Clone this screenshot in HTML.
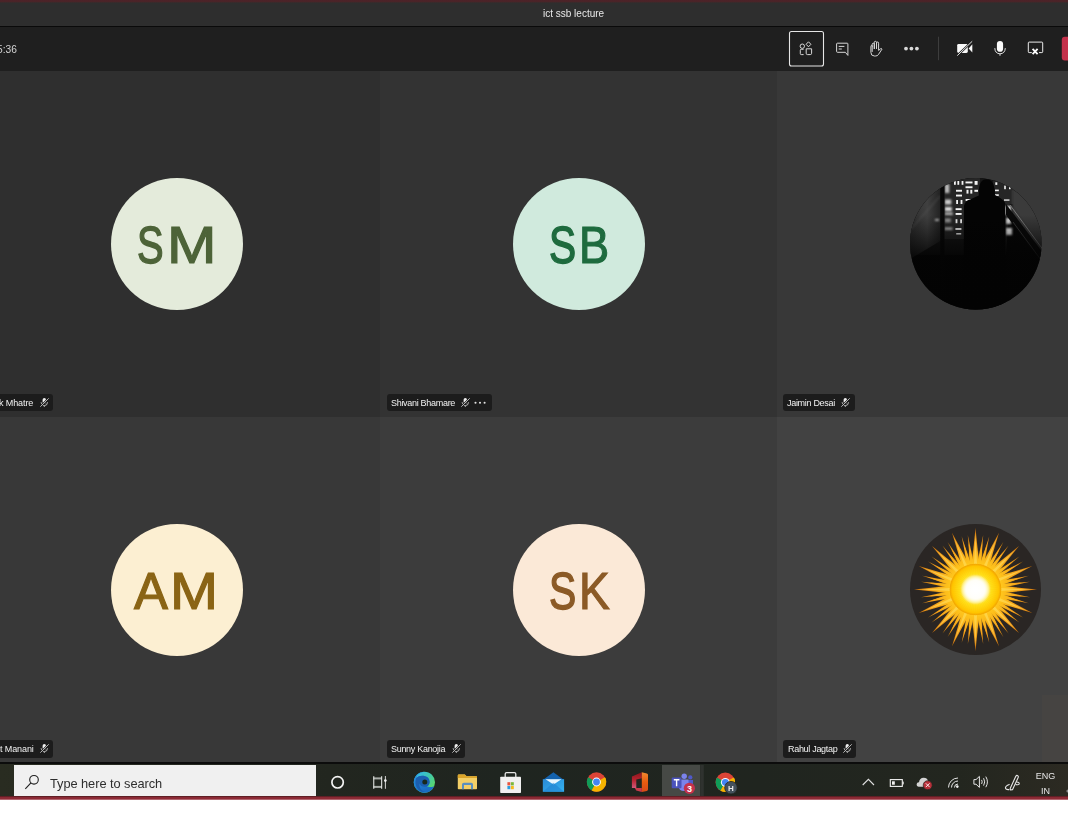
<!DOCTYPE html>
<html><head><meta charset="utf-8">
<style>
*{margin:0;padding:0;box-sizing:border-box}
html,body{width:1068px;height:816px;overflow:hidden;background:#fff;font-family:"Liberation Sans",sans-serif}
.a{position:absolute}
#topline{left:0;top:0;width:1068px;height:3px;background:linear-gradient(#4e2228,#4a2428 55%,#2e2e2e)}
#titlebar{left:0;top:3px;width:1068px;height:23px;background:#2e2e2e}
#title{left:542.5px;top:7.7px;color:#e8e8e8;font-size:10px;white-space:nowrap;will-change:transform}
#blk1{left:0;top:26px;width:1068px;height:1px;background:#0a0a0a}
#toolbar{left:0;top:27px;width:1068px;height:44px;background:#1f1f1f}
#timer{left:-2.6px;top:44px;color:#d4d4d4;font-size:10.2px;will-change:transform}
.tile{position:absolute}
.circ{position:absolute;width:132px;height:132px;border-radius:50%}
.ltr{position:absolute;font-size:54px;line-height:80px;-webkit-text-stroke:1.2px currentColor;transform-origin:0 0;white-space:nowrap}
.lbl{position:absolute;background:#1c1c1c;border-radius:3px}
.lt{position:absolute;will-change:transform;color:#f2f2f2;font-size:9px;line-height:17px;letter-spacing:-0.3px;white-space:nowrap}
#tbline{left:0;top:762px;width:1068px;height:2px;background:#0c0c0c}
#taskbar{left:0;top:764px;width:1068px;height:32px;background:linear-gradient(90deg,#292c21 0px,#22261f 330px,#1f2520 500px,#20251f 760px,#23261f 960px,#2c2a22 1068px)}
#redline{left:0;top:796px;width:1068px;height:4px;background:linear-gradient(#4a1a1e,#8e2a35 40%,#8e2a35 80%,#e8c8cc)}
#search{left:14px;top:765px;width:302px;height:31px;background:#f0f0f0}
#searchtxt{left:50.3px;top:776px;font-size:12.8px;color:#2e2e2e;white-space:nowrap;will-change:transform;letter-spacing:-0.05px}
</style></head><body>
<div class="a" id="topline"></div>
<div class="a" id="titlebar"></div>
<div class="a" id="title">ict ssb lecture</div>
<div class="a" id="blk1"></div>
<div class="a" id="toolbar"></div>
<div class="a" id="timer">5:36</div>


<svg class="a" style="left:0;top:0" width="1068" height="816" viewBox="0 0 1068 816">
<!-- participants box -->
<rect x="789.5" y="31.5" width="34" height="34.5" rx="2" fill="none" stroke="#e6e6e6" stroke-width="1.1"/>
<g fill="none" stroke="#d8d8d8" stroke-width="1">
<circle cx="802.3" cy="46.2" r="2.2"/>
<path d="M808.5 41.8 L810.9 44.3 L808.5 46.8 L806.1 44.3 Z" stroke-linejoin="round"/>
<path d="M803.6 49.3 H801.2 Q800.3 49.3 800.3 50.2 V53.6 Q800.3 54.6 801.2 54.6 H803.6"/>
<path d="M806.2 48.8 H811.6 V53.3 Q811.6 54.6 810.3 54.6 H807.5 Q806.2 54.6 806.2 53.3 Z"/>
</g>
<!-- chat -->
<g fill="none" stroke="#d8d8d8" stroke-width="1">
<path d="M837.4 43.2 H847.2 Q847.9 43.2 847.9 43.9 V55.4 L845.4 52.3 H837.4 Q836.6 52.3 836.6 51.5 V44 Q836.6 43.2 837.4 43.2 Z" stroke-linejoin="round"/>
<path d="M838.7 46.4 H844.4 M838.7 49 H841.8"/>
</g>
<!-- hand -->
<g fill="none" stroke="#d8d8d8" stroke-width="1" stroke-linecap="round" stroke-linejoin="round">
<path d="M872.2 51.5 V44.4 Q872.2 43.2 873.3 43.2 Q874.3 43.2 874.3 44.4 V49 V42.5 Q874.3 41.3 875.4 41.3 Q876.5 41.3 876.5 42.5 V48.8 V43.2 Q876.5 42 877.6 42 Q878.6 42 878.6 43.2 V50.4 L880.5 48.8 Q881.6 48 882 49.1 L878.4 54.6 Q877.5 56 875.5 56 H874.4 Q870.9 56 870.9 52.4 V46.4 Q870.9 45.4 871.6 45.4 Q872.2 45.4 872.2 46.4"/>
</g>
<!-- dots -->
<g fill="#d9d9d9"><circle cx="906" cy="48.6" r="1.9"/><circle cx="911.4" cy="48.6" r="1.9"/><circle cx="916.9" cy="48.6" r="1.9"/></g>
<!-- separator -->
<rect x="938" y="36.7" width="1" height="23.5" fill="#3d3d3d"/>
<!-- camera off -->
<g fill="#fafafa">
<rect x="957.2" y="43.9" width="10.6" height="9" rx="1.4"/>
<path d="M968.7 48.4 L972.3 44.3 V52.5 Z"/>
</g>
<path d="M956.8 56 L972.6 41" stroke="#1f1f1f" stroke-width="2.2"/>
<path d="M957.3 55.6 L972.2 41.3" stroke="#fafafa" stroke-width="0.9"/>
<!-- mic -->
<rect x="996.9" y="41" width="6.2" height="10.8" rx="3.1" fill="#fafafa"/>
<path d="M994.8 48.1 Q995 53.6 1000 53.8 Q1005 53.6 1005.3 48.1 M1000 53.8 V55.8" fill="none" stroke="#f0f0f0" stroke-width="0.9"/>
<!-- share off -->
<path d="M1031.8 52.6 H1029.1 Q1028.3 52.6 1028.3 51.8 V42.9 Q1028.3 42.1 1029.1 42.1 H1041.9 Q1042.7 42.1 1042.7 42.9 V51.8 Q1042.7 52.6 1041.9 52.6 H1039" fill="none" stroke="#ececec" stroke-width="1"/>
<path d="M1032.6 48.8 L1037.6 54.2 M1037.6 48.8 L1032.6 54.2" stroke="#ffffff" stroke-width="1.8"/>
<!-- red leave -->
<rect x="1061.8" y="36.8" width="20" height="23.6" rx="3" fill="#c4314b"/>
</svg>

<!-- tiles -->
<div class="tile" style="left:0;top:71px;width:380px;height:346px;background:#2f2f2f"></div>
<div class="tile" style="left:380px;top:71px;width:397px;height:346px;background:#333333"></div>
<div class="tile" style="left:777px;top:71px;width:291px;height:346px;background:#383838"></div>
<div class="tile" style="left:0;top:417px;width:380px;height:345px;background:#383838"></div>
<div class="tile" style="left:380px;top:417px;width:397px;height:345px;background:#3c3c3c"></div>
<div class="tile" style="left:777px;top:417px;width:291px;height:345px;background:#424242"></div>

<div class="tile" style="left:1042px;top:695px;width:26px;height:67px;background:#464442"></div>
<div class="circ" style="left:111px;top:178px;background:#e4ebdb"></div>
<div class="circ" style="left:513px;top:178px;background:#d0eadd"></div>
<div class="circ" style="left:111px;top:524px;background:#fcefd2"></div>
<div class="circ" style="left:513px;top:524px;background:#fbe9d7"></div>
<div class="ltr" style="left:137.40px;top:205.40px;transform:scale(0.738,0.975);color:#4d6338;-webkit-text-stroke-width:1.5px">S</div>
<div class="ltr" style="left:166.60px;top:205.40px;transform:scale(1.100,0.975);color:#4d6338">M</div>
<div class="ltr" style="left:549.00px;top:205.40px;transform:scale(0.753,0.975);color:#1e6b3e;-webkit-text-stroke-width:1.5px">S</div>
<div class="ltr" style="left:578.95px;top:205.40px;transform:scale(0.837,0.975);color:#1e6b3e">B</div>
<div class="ltr" style="left:134.00px;top:551.40px;transform:scale(0.942,0.975);color:#8a6415">A</div>
<div class="ltr" style="left:170.40px;top:551.40px;transform:scale(1.068,0.975);color:#8a6415">M</div>
<div class="ltr" style="left:548.80px;top:551.40px;transform:scale(0.756,0.975);color:#8b5a26;-webkit-text-stroke-width:1.5px">S</div>
<div class="ltr" style="left:578.60px;top:551.40px;transform:scale(0.853,0.975);color:#8b5a26">K</div>
<svg class="a" style="left:0;top:0" width="1068" height="816">
<defs>
<filter id="bl" x="-50%" y="-50%" width="200%" height="200%"><feGaussianBlur stdDeviation="1"/></filter><filter id="bl2" x="-50%" y="-50%" width="200%" height="200%"><feGaussianBlur stdDeviation="0.45"/></filter>
<linearGradient id="fadeB" x1="0" y1="0" x2="0" y2="1"><stop offset="0" stop-color="#030303" stop-opacity="0"/><stop offset="0.4" stop-color="#030303" stop-opacity="0.85"/><stop offset="1" stop-color="#030303" stop-opacity="1"/></linearGradient>
<radialGradient id="glow" cx="0.5" cy="0.5" r="0.5"><stop offset="0.6" stop-color="#f5a010" stop-opacity="0.9"/><stop offset="1" stop-color="#e08010" stop-opacity="0"/></radialGradient>
<clipPath id="pc"><circle cx="975.8" cy="243.7" r="65.8"/></clipPath>
<linearGradient id="pg" x1="0" y1="0" x2="0" y2="1"><stop offset="0" stop-color="#3a3a3a"/><stop offset="0.45" stop-color="#1a1a1a"/><stop offset="0.7" stop-color="#060606"/><stop offset="1" stop-color="#020202"/></linearGradient>
<linearGradient id="lg" x1="0" y1="0" x2="1" y2="0"><stop offset="0" stop-color="#262626"/><stop offset="0.6" stop-color="#404040"/><stop offset="1" stop-color="#1e1e1e"/></linearGradient>
<radialGradient id="sunC" cx="0.5" cy="0.5" r="0.5"><stop offset="0" stop-color="#ffffff"/><stop offset="0.4" stop-color="#fff6b0"/><stop offset="0.62" stop-color="#ffe11a"/><stop offset="0.9" stop-color="#ffc400"/><stop offset="1" stop-color="#f0a000"/></radialGradient><radialGradient id="sunW" cx="0.5" cy="0.5" r="0.5"><stop offset="0" stop-color="#fff" stop-opacity="1"/><stop offset="0.6" stop-color="#fff" stop-opacity="0.9"/><stop offset="1" stop-color="#fff" stop-opacity="0"/></radialGradient>
<radialGradient id="spk" cx="975.5" cy="589.5" r="62" gradientUnits="userSpaceOnUse"><stop offset="0.4" stop-color="#ffc81a"/><stop offset="0.7" stop-color="#f6a21a"/><stop offset="1" stop-color="#c86e0c"/></radialGradient>
</defs>
<g clip-path="url(#pc)">
<rect x="905" y="175" width="142" height="140" fill="#060606"/>
<path d="M905 175 H1047 V255 L1010 200 L1006 255 H905 Z" fill="#161616"/>
<path d="M905 262 L905 205 L942 178 L942 240 Z" fill="url(#lg)"/>
<path d="M905 236 L940 196" stroke="#5a5a5a" stroke-width="2" opacity="0.35" filter="url(#bl)"/>
<rect x="944" y="177" width="36" height="62" fill="#262626"/>
<rect x="993" y="177" width="20" height="27" fill="#262626"/>
<g filter="url(#bl)"><rect x="944.8" y="184" width="4.5" height="9" fill="#bbb"/><rect x="944.8" y="199.5" width="6.5" height="5" fill="#ccc"/><rect x="944.8" y="207" width="7" height="4" fill="#ddd"/><rect x="944.8" y="212.5" width="8" height="2.5" fill="#bbb"/><rect x="944.8" y="218.5" width="6" height="4" fill="#999"/><rect x="944.5" y="227.5" width="8" height="2.5" fill="#ccc"/><rect x="935" y="219" width="4" height="2" fill="#bbb"/><rect x="1005" y="206" width="6" height="9" fill="#eee"/><rect x="1006" y="218" width="5" height="6" fill="#ddd"/><rect x="1006" y="228" width="6" height="7" fill="#fff"/></g>
<g fill="#f4f4f4" filter="url(#bl2)"><rect x="954" y="181" width="1.8" height="3.8"/><rect x="957.4" y="181" width="1.8" height="3.8"/><rect x="961.6" y="181" width="1.8" height="3.8"/><rect x="956" y="189.8" width="6" height="1.9"/><rect x="956" y="194.6" width="6" height="1.9"/><rect x="956.2" y="200" width="1.8" height="4"/><rect x="960.6" y="200" width="1.8" height="4"/><rect x="955.6" y="208.2" width="6" height="1.9"/><rect x="955.6" y="213" width="6" height="1.9"/><rect x="955.6" y="219.2" width="1.8" height="4"/><rect x="960.2" y="219.2" width="1.8" height="4"/><rect x="955.4" y="228" width="6" height="2"/><rect x="956.2" y="233" width="5" height="1.6"/><rect x="965.5" y="181.5" width="7" height="1.9"/><rect x="965.5" y="186.3" width="7" height="1.9"/><rect x="966.5" y="189.8" width="2" height="3.8"/><rect x="970.3" y="189.8" width="2" height="3.8"/><rect x="965.6" y="199" width="6" height="1.9"/><rect x="966" y="204" width="2" height="2.2"/><rect x="974.6" y="181" width="3" height="3.8"/><rect x="974.4" y="189.8" width="3.6" height="2"/><rect x="995.3" y="182.3" width="2" height="2.6"/><rect x="995" y="189.6" width="3.8" height="1.6"/><rect x="995" y="194.3" width="3.8" height="1.6"/><rect x="1004.2" y="185.6" width="1.6" height="3.6"/><rect x="1009" y="185.6" width="1.6" height="3.6"/><rect x="1004" y="199.4" width="5.5" height="1.3"/></g>
<rect x="940.3" y="175" width="4.2" height="140" fill="#080808"/>
<path d="M1012 190 L1047 160 L1047 262 L1012 214 Z" fill="#444" opacity="0.8" filter="url(#bl)"/>
<path d="M1006 204 L1047 258 L1047 270 L1006 215 Z" fill="#0a0a0a"/>
<path d="M1010 205 L1047 255" stroke="#7a7a7a" stroke-width="1"/>
<path d="M1013 222 L1047 268" stroke="#444" stroke-width="0.8"/>
<path d="M978.8 195.5 Q978 179.2 986.5 179.2 Q995 179.2 995 195 Q1003 199 1005.2 203 L1005.8 320 L963.5 320 L964 206 Q965 200.5 970 199.5 Z" fill="#040404"/>
<rect x="905" y="215" width="142" height="105" fill="url(#fadeB)"/>
</g>
<circle cx="975.5" cy="589.5" r="65.5" fill="#2a2624"/>
<circle cx="975.5" cy="589.5" r="40" fill="url(#glow)"/>
<g filter="url(#bl2)">
<g fill="url(#spk)"><path d="M971.8 564.8 L975.5 528.0 L979.2 564.8 Z"/><path d="M970.0 565.1 L967.8 535.0 L974.0 564.5 Z"/><path d="M977.0 564.5 L983.2 535.0 L981.0 565.1 Z"/><path d="M977.7 564.6 L982.4 543.0 L980.6 565.0 Z"/><path d="M980.1 564.9 L987.0 543.9 L983.0 565.7 Z"/><path d="M981.5 565.2 L999.0 532.7 L988.4 568.1 Z"/><path d="M979.8 564.9 L989.3 536.2 L983.7 565.9 Z"/><path d="M986.4 567.0 L1003.4 542.1 L989.9 569.0 Z"/><path d="M987.0 567.3 L999.6 549.2 L989.6 568.9 Z"/><path d="M989.2 568.6 L1003.5 551.8 L991.6 570.4 Z"/><path d="M990.3 569.4 L1019.0 546.0 L995.6 574.7 Z"/><path d="M988.9 568.4 L1008.6 545.6 L992.1 570.8 Z"/><path d="M994.2 572.9 L1019.4 556.4 L996.6 576.1 Z"/><path d="M994.6 573.4 L1013.2 561.5 L996.4 575.8 Z"/><path d="M996.1 575.4 L1015.8 565.4 L997.7 578.0 Z"/><path d="M996.9 576.6 L1032.3 566.0 L999.8 583.5 Z"/><path d="M996.0 575.1 L1022.9 561.6 L998.0 578.6 Z"/><path d="M999.1 581.3 L1028.8 575.7 L1000.1 585.2 Z"/><path d="M999.3 582.0 L1021.1 578.0 L1000.1 584.9 Z"/><path d="M1000.0 584.4 L1022.0 582.6 L1000.4 587.3 Z"/><path d="M1000.2 585.8 L1037.0 589.5 L1000.2 593.2 Z"/><path d="M999.9 584.0 L1030.0 581.8 L1000.5 588.0 Z"/><path d="M1000.5 591.0 L1030.0 597.2 L999.9 595.0 Z"/><path d="M1000.4 591.7 L1022.0 596.4 L1000.0 594.6 Z"/><path d="M1000.1 594.1 L1021.1 601.0 L999.3 597.0 Z"/><path d="M999.8 595.5 L1032.3 613.0 L996.9 602.4 Z"/><path d="M1000.1 593.8 L1028.8 603.3 L999.1 597.7 Z"/><path d="M998.0 600.4 L1022.9 617.4 L996.0 603.9 Z"/><path d="M997.7 601.0 L1015.8 613.6 L996.1 603.6 Z"/><path d="M996.4 603.2 L1013.2 617.5 L994.6 605.6 Z"/><path d="M995.6 604.3 L1019.0 633.0 L990.3 609.6 Z"/><path d="M996.6 602.9 L1019.4 622.6 L994.2 606.1 Z"/><path d="M992.1 608.2 L1008.6 633.4 L988.9 610.6 Z"/><path d="M991.6 608.6 L1003.5 627.2 L989.2 610.4 Z"/><path d="M989.6 610.1 L999.6 629.8 L987.0 611.7 Z"/><path d="M988.4 610.9 L999.0 646.3 L981.5 613.8 Z"/><path d="M989.9 610.0 L1003.4 636.9 L986.4 612.0 Z"/><path d="M983.7 613.1 L989.3 642.8 L979.8 614.1 Z"/><path d="M983.0 613.3 L987.0 635.1 L980.1 614.1 Z"/><path d="M980.6 614.0 L982.4 636.0 L977.7 614.4 Z"/><path d="M979.2 614.2 L975.5 651.0 L971.8 614.2 Z"/><path d="M981.0 613.9 L983.2 644.0 L977.0 614.5 Z"/><path d="M974.0 614.5 L967.8 644.0 L970.0 613.9 Z"/><path d="M973.3 614.4 L968.6 636.0 L970.4 614.0 Z"/><path d="M970.9 614.1 L964.0 635.1 L968.0 613.3 Z"/><path d="M969.5 613.8 L952.0 646.3 L962.6 610.9 Z"/><path d="M971.2 614.1 L961.7 642.8 L967.3 613.1 Z"/><path d="M964.6 612.0 L947.6 636.9 L961.1 610.0 Z"/><path d="M964.0 611.7 L951.4 629.8 L961.4 610.1 Z"/><path d="M961.8 610.4 L947.5 627.2 L959.4 608.6 Z"/><path d="M960.7 609.6 L932.0 633.0 L955.4 604.3 Z"/><path d="M962.1 610.6 L942.4 633.4 L958.9 608.2 Z"/><path d="M956.8 606.1 L931.6 622.6 L954.4 602.9 Z"/><path d="M956.4 605.6 L937.8 617.5 L954.6 603.2 Z"/><path d="M954.9 603.6 L935.2 613.6 L953.3 601.0 Z"/><path d="M954.1 602.4 L918.7 613.0 L951.2 595.5 Z"/><path d="M955.0 603.9 L928.1 617.4 L953.0 600.4 Z"/><path d="M951.9 597.7 L922.2 603.3 L950.9 593.8 Z"/><path d="M951.7 597.0 L929.9 601.0 L950.9 594.1 Z"/><path d="M951.0 594.6 L929.0 596.4 L950.6 591.7 Z"/><path d="M950.8 593.2 L914.0 589.5 L950.8 585.8 Z"/><path d="M951.1 595.0 L921.0 597.2 L950.5 591.0 Z"/><path d="M950.5 588.0 L921.0 581.8 L951.1 584.0 Z"/><path d="M950.6 587.3 L929.0 582.6 L951.0 584.4 Z"/><path d="M950.9 584.9 L929.9 578.0 L951.7 582.0 Z"/><path d="M951.2 583.5 L918.7 566.0 L954.1 576.6 Z"/><path d="M950.9 585.2 L922.2 575.7 L951.9 581.3 Z"/><path d="M953.0 578.6 L928.1 561.6 L955.0 575.1 Z"/><path d="M953.3 578.0 L935.2 565.4 L954.9 575.4 Z"/><path d="M954.6 575.8 L937.8 561.5 L956.4 573.4 Z"/><path d="M955.4 574.7 L932.0 546.0 L960.7 569.4 Z"/><path d="M954.4 576.1 L931.6 556.4 L956.8 572.9 Z"/><path d="M958.9 570.8 L942.4 545.6 L962.1 568.4 Z"/><path d="M959.4 570.4 L947.5 551.8 L961.8 568.6 Z"/><path d="M961.4 568.9 L951.4 549.2 L964.0 567.3 Z"/><path d="M962.6 568.1 L952.0 532.7 L969.5 565.2 Z"/><path d="M961.1 569.0 L947.6 542.1 L964.6 567.0 Z"/><path d="M967.3 565.9 L961.7 536.2 L971.2 564.9 Z"/><path d="M968.0 565.7 L964.0 543.9 L970.9 564.9 Z"/><path d="M970.4 565.0 L968.6 543.0 L973.3 564.6 Z"/></g>
<g fill="#ffe060" opacity="0.6"><path d="M974.0 564.5 L975.5 532.5 L977.0 564.5 Z"/><path d="M983.7 565.9 L997.3 536.8 L986.4 567.0 Z"/><path d="M992.1 570.8 L1015.8 549.2 L994.2 572.9 Z"/><path d="M998.0 578.6 L1028.2 567.7 L999.1 581.3 Z"/><path d="M1000.5 588.0 L1032.5 589.5 L1000.5 591.0 Z"/><path d="M999.1 597.7 L1028.2 611.3 L998.0 600.4 Z"/><path d="M994.2 606.1 L1015.8 629.8 L992.1 608.2 Z"/><path d="M986.4 612.0 L997.3 642.2 L983.7 613.1 Z"/><path d="M977.0 614.5 L975.5 646.5 L974.0 614.5 Z"/><path d="M967.3 613.1 L953.7 642.2 L964.6 612.0 Z"/><path d="M958.9 608.2 L935.2 629.8 L956.8 606.1 Z"/><path d="M953.0 600.4 L922.8 611.3 L951.9 597.7 Z"/><path d="M950.5 591.0 L918.5 589.5 L950.5 588.0 Z"/><path d="M951.9 581.3 L922.8 567.7 L953.0 578.6 Z"/><path d="M956.8 572.9 L935.2 549.2 L958.9 570.8 Z"/><path d="M964.6 567.0 L953.7 536.8 L967.3 565.9 Z"/></g>
</g>
<circle cx="975.5" cy="589.5" r="25.8" fill="url(#sunC)"/>
<g stroke="#ffc000" stroke-width="0.5" opacity="0.35"><path d="M989.5 589.5 L1000.5 589.5"/><path d="M989.4 590.9 L1000.4 592.0"/><path d="M989.2 592.2 L1000.0 594.4"/><path d="M988.9 593.6 L999.4 596.8"/><path d="M988.4 594.9 L998.6 599.1"/><path d="M987.8 596.1 L997.5 601.3"/><path d="M987.1 597.3 L996.3 603.4"/><path d="M986.3 598.4 L994.8 605.4"/><path d="M985.4 599.4 L993.2 607.2"/><path d="M984.4 600.3 L991.4 608.8"/><path d="M983.3 601.1 L989.4 610.3"/><path d="M982.1 601.8 L987.3 611.5"/><path d="M980.9 602.4 L985.1 612.6"/><path d="M979.6 602.9 L982.8 613.4"/><path d="M978.2 603.2 L980.4 614.0"/><path d="M976.9 603.4 L978.0 614.4"/><path d="M975.5 603.5 L975.5 614.5"/><path d="M974.1 603.4 L973.0 614.4"/><path d="M972.8 603.2 L970.6 614.0"/><path d="M971.4 602.9 L968.2 613.4"/><path d="M970.1 602.4 L965.9 612.6"/><path d="M968.9 601.8 L963.7 611.5"/><path d="M967.7 601.1 L961.6 610.3"/><path d="M966.6 600.3 L959.6 608.8"/><path d="M965.6 599.4 L957.8 607.2"/><path d="M964.7 598.4 L956.2 605.4"/><path d="M963.9 597.3 L954.7 603.4"/><path d="M963.2 596.1 L953.5 601.3"/><path d="M962.6 594.9 L952.4 599.1"/><path d="M962.1 593.6 L951.6 596.8"/><path d="M961.8 592.2 L951.0 594.4"/><path d="M961.6 590.9 L950.6 592.0"/><path d="M961.5 589.5 L950.5 589.5"/><path d="M961.6 588.1 L950.6 587.0"/><path d="M961.8 586.8 L951.0 584.6"/><path d="M962.1 585.4 L951.6 582.2"/><path d="M962.6 584.1 L952.4 579.9"/><path d="M963.2 582.9 L953.5 577.7"/><path d="M963.9 581.7 L954.7 575.6"/><path d="M964.7 580.6 L956.2 573.6"/><path d="M965.6 579.6 L957.8 571.8"/><path d="M966.6 578.7 L959.6 570.2"/><path d="M967.7 577.9 L961.6 568.7"/><path d="M968.9 577.2 L963.7 567.5"/><path d="M970.1 576.6 L965.9 566.4"/><path d="M971.4 576.1 L968.2 565.6"/><path d="M972.8 575.8 L970.6 565.0"/><path d="M974.1 575.6 L973.0 564.6"/><path d="M975.5 575.5 L975.5 564.5"/><path d="M976.9 575.6 L978.0 564.6"/><path d="M978.2 575.8 L980.4 565.0"/><path d="M979.6 576.1 L982.8 565.6"/><path d="M980.9 576.6 L985.1 566.4"/><path d="M982.1 577.2 L987.3 567.5"/><path d="M983.3 577.9 L989.4 568.7"/><path d="M984.4 578.7 L991.4 570.2"/><path d="M985.4 579.6 L993.2 571.8"/><path d="M986.3 580.6 L994.8 573.6"/><path d="M987.1 581.7 L996.3 575.6"/><path d="M987.8 582.9 L997.5 577.7"/><path d="M988.4 584.1 L998.6 579.9"/><path d="M988.9 585.4 L999.4 582.2"/><path d="M989.2 586.8 L1000.0 584.6"/><path d="M989.4 588.1 L1000.4 587.0"/></g>
<circle cx="975.5" cy="589.5" r="15" fill="url(#sunW)"/>
</svg>
<div class="lbl" style="left:-10px;top:394px;width:63px;height:17px"></div>
<div class="lt" style="left:-0.6px;top:394.8px;letter-spacing:-0.1px">k Mhatre</div>
<div class="lbl" style="left:387px;top:394px;width:105px;height:17px"></div>
<div class="lt" style="left:390.7px;top:394.8px">Shivani Bhamare</div>
<div class="lbl" style="left:783px;top:394px;width:72px;height:17px"></div>
<div class="lt" style="left:787px;top:394.8px">Jaimin Desai</div>
<div class="lbl" style="left:-10px;top:740px;width:63px;height:17.5px"></div>
<div class="lt" style="left:-0.3px;top:740.5px;letter-spacing:-0.1px">t Manani</div>
<div class="lbl" style="left:387px;top:740px;width:78px;height:17.5px"></div>
<div class="lt" style="left:390.8px;top:741.2px">Sunny Kanojia</div>
<div class="lbl" style="left:783px;top:740px;width:73px;height:17.5px"></div>
<div class="lt" style="left:787.8px;top:741.2px">Rahul Jagtap</div>
<svg class="a" style="left:0;top:0" width="1068" height="816">
<g transform="translate(40,398)"><rect x="2.6" y="0" width="3.4" height="5.6" rx="1.7" fill="#eee"/><path d="M1.1 4.2 Q1.2 7.6 4.3 7.7 Q7.4 7.6 7.5 4.2 M4.3 7.7 V8.9" fill="none" stroke="#ddd" stroke-width="0.8"/><path d="M0 9 L9 0" stroke="#1c1c1c" stroke-width="1.8"/><path d="M0.3 8.7 L8.7 0.3" stroke="#e8e8e8" stroke-width="0.75"/></g><g transform="translate(461,398)"><rect x="2.6" y="0" width="3.4" height="5.6" rx="1.7" fill="#eee"/><path d="M1.1 4.2 Q1.2 7.6 4.3 7.7 Q7.4 7.6 7.5 4.2 M4.3 7.7 V8.9" fill="none" stroke="#ddd" stroke-width="0.8"/><path d="M0 9 L9 0" stroke="#1c1c1c" stroke-width="1.8"/><path d="M0.3 8.7 L8.7 0.3" stroke="#e8e8e8" stroke-width="0.75"/></g><g transform="translate(841,398)"><rect x="2.6" y="0" width="3.4" height="5.6" rx="1.7" fill="#eee"/><path d="M1.1 4.2 Q1.2 7.6 4.3 7.7 Q7.4 7.6 7.5 4.2 M4.3 7.7 V8.9" fill="none" stroke="#ddd" stroke-width="0.8"/><path d="M0 9 L9 0" stroke="#1c1c1c" stroke-width="1.8"/><path d="M0.3 8.7 L8.7 0.3" stroke="#e8e8e8" stroke-width="0.75"/></g>
<g transform="translate(40,744)"><rect x="2.6" y="0" width="3.4" height="5.6" rx="1.7" fill="#eee"/><path d="M1.1 4.2 Q1.2 7.6 4.3 7.7 Q7.4 7.6 7.5 4.2 M4.3 7.7 V8.9" fill="none" stroke="#ddd" stroke-width="0.8"/><path d="M0 9 L9 0" stroke="#1c1c1c" stroke-width="1.8"/><path d="M0.3 8.7 L8.7 0.3" stroke="#e8e8e8" stroke-width="0.75"/></g><g transform="translate(452,744)"><rect x="2.6" y="0" width="3.4" height="5.6" rx="1.7" fill="#eee"/><path d="M1.1 4.2 Q1.2 7.6 4.3 7.7 Q7.4 7.6 7.5 4.2 M4.3 7.7 V8.9" fill="none" stroke="#ddd" stroke-width="0.8"/><path d="M0 9 L9 0" stroke="#1c1c1c" stroke-width="1.8"/><path d="M0.3 8.7 L8.7 0.3" stroke="#e8e8e8" stroke-width="0.75"/></g><g transform="translate(843,744)"><rect x="2.6" y="0" width="3.4" height="5.6" rx="1.7" fill="#eee"/><path d="M1.1 4.2 Q1.2 7.6 4.3 7.7 Q7.4 7.6 7.5 4.2 M4.3 7.7 V8.9" fill="none" stroke="#ddd" stroke-width="0.8"/><path d="M0 9 L9 0" stroke="#1c1c1c" stroke-width="1.8"/><path d="M0.3 8.7 L8.7 0.3" stroke="#e8e8e8" stroke-width="0.75"/></g>
<g fill="#e0e0e0"><circle cx="475.5" cy="402.7" r="1.05"/><circle cx="480" cy="402.7" r="1.05"/><circle cx="484.6" cy="402.7" r="1.05"/></g>
</svg>

<div class="a" id="tbline"></div>
<div class="a" id="taskbar"></div>
<div class="a" id="search"></div>
<div class="a" id="searchtxt">Type here to search</div>

<svg class="a" style="left:0;top:0" width="1068" height="816">
<defs>
<linearGradient id="edgeG" x1="0.2" y1="0" x2="1" y2="0.6"><stop offset="0" stop-color="#33b8e8"/><stop offset="0.5" stop-color="#3ec6b0"/><stop offset="1" stop-color="#5ad86c"/></linearGradient>
<linearGradient id="edgeB" x1="0" y1="0" x2="0.3" y2="1"><stop offset="0" stop-color="#2a9ae6"/><stop offset="1" stop-color="#1a6cc4"/></linearGradient>
<linearGradient id="mailG" x1="0" y1="0" x2="1" y2="1"><stop offset="0" stop-color="#2a8ad6"/><stop offset="1" stop-color="#35b2f0"/></linearGradient>
<linearGradient id="offL" x1="0" y1="0" x2="0" y2="1"><stop offset="0" stop-color="#8a141c"/><stop offset="0.5" stop-color="#b82430"/><stop offset="1" stop-color="#d0587a"/></linearGradient><linearGradient id="offR" x1="0" y1="0" x2="0" y2="1"><stop offset="0" stop-color="#f08a30"/><stop offset="0.5" stop-color="#e85c10"/><stop offset="1" stop-color="#d84a18"/></linearGradient>
</defs>
<!-- search magnifier -->
<circle cx="34" cy="779.8" r="4.3" fill="none" stroke="#1e1e1e" stroke-width="1.1"/>
<path d="M30.9 782.9 L25.3 788.8" stroke="#1e1e1e" stroke-width="1.1"/>
<!-- cortana -->
<circle cx="337.6" cy="782.3" r="5.7" fill="none" stroke="#f4f4f4" stroke-width="1.7"/>
<!-- task view -->
<g>
<rect x="373.4" y="777.4" width="8.6" height="2" fill="#a9ada9"/>
<rect x="373.4" y="785.9" width="8.6" height="2" fill="#a9ada9"/>
<rect x="373.2" y="776.2" width="1.1" height="12.6" fill="#dfe2df"/>
<rect x="381.1" y="776.2" width="1.1" height="12.6" fill="#dfe2df"/>
<rect x="384.9" y="776" width="0.9" height="12.8" fill="#e6e6e6"/>
<circle cx="385.35" cy="780.6" r="1.3" fill="#f0f0f0"/>
</g>
<!-- edge -->
<circle cx="424.4" cy="782.3" r="10.6" fill="url(#edgeG)"/>
<path d="M413.8 782.3 A10.6 10.6 0 0 1 424.4 771.7 Q417.5 772.5 416.2 778 Q419 775.3 423.5 775.8 Q429.2 776.6 429.6 781.6 Q429.8 784.9 427 786.4 Q433 787.8 434.3 786 A10.6 10.6 0 0 1 413.8 782.3 Z" fill="url(#edgeB)"/>
<path d="M416.2 778 Q419 775.3 423.5 775.8 Q429.2 776.6 429.6 781.6 Q429.8 784.9 427 786.4 Q421.5 787.8 419.5 783.5 Q418.2 789.5 426 792.6 Q416.6 791.8 415.5 783.5 Q415.2 780.5 416.2 778 Z" fill="#1b5fb0"/>
<circle cx="424.8" cy="782" r="2.5" fill="#17291f"/>
<!-- folder -->
<path d="M457.8 775.5 Q457.8 774.6 458.7 774.6 H464.8 L466.6 776.3 H476.2 Q477 776.3 477 777.1 V788.4 Q477 789.2 476.2 789.2 H458.6 Q457.8 789.2 457.8 788.4 Z" fill="#f3cf67"/>
<path d="M457.8 775.5 Q457.8 774.6 458.7 774.6 H464.8 L466.6 776.3 H477 V778 H457.8 Z" fill="#dba52a"/>
<path d="M462 789.2 V784.5 Q462 782.8 463.8 782.8 H471.3 Q473 782.8 473 784.5 V789.2 H471 V785 H464 V789.2 Z" fill="#5a8fc0"/>
<!-- store -->
<path d="M505.2 777.5 V774 Q505.2 772.6 506.6 772.6 H514.4 Q515.8 772.6 515.8 774 V777.5" fill="none" stroke="#e6e6e6" stroke-width="1.3"/>
<rect x="500.2" y="776.8" width="20.8" height="16.2" rx="0.8" fill="#f1f1f1"/>
<rect x="507.4" y="782.2" width="2.9" height="3.2" fill="#e8553e"/>
<rect x="510.9" y="782.2" width="2.9" height="3.2" fill="#7bb83a"/>
<rect x="507.4" y="786" width="2.9" height="3.2" fill="#2a9ee0"/>
<rect x="510.9" y="786" width="2.9" height="3.2" fill="#f6b91d"/>
<!-- mail -->
<path d="M542.8 780 L553.4 772.2 L564 780 Z" fill="#1462ad"/>
<rect x="542.8" y="779.2" width="21.3" height="12.6" fill="url(#mailG)"/>
<path d="M545.5 779.2 H561.5 L553.5 784.4 Z" fill="#e8f6fe"/>
<path d="M542.8 791.8 L553.4 782.8 L564 791.8 Z" fill="#1f7fd0" opacity="0.55"/>
<!-- chrome -->
<g id="chr">
<circle cx="596.5" cy="782" r="9.7" fill="#db4437"/>
<path d="M596.5 782 L588.1 777.15 A9.7 9.7 0 0 0 591.65 790.4 Z" fill="#0f9d58"/>
<path d="M596.5 782 L591.65 790.4 A9.7 9.7 0 0 0 606.2 782 L605.4 777.8 Z" fill="#f4b400"/>
<path d="M596.5 782 L606.2 782 A9.7 9.7 0 0 0 604.9 777.15 Z" fill="#f4b400"/>
<circle cx="596.5" cy="782" r="4.4" fill="#fff"/>
<circle cx="596.5" cy="782" r="3.4" fill="#4285f4"/>
</g>
<!-- office -->
<path d="M631.9 776.6 L641.8 772.3 V778.2 L636.3 779.4 V788 H631.9 Z" fill="url(#offL)"/>
<path d="M634.8 788 H641.8 V792 L636.2 790.6 Z" fill="#c93a4c"/>
<path d="M641.8 772.3 L646.9 773.5 Q648 773.9 648 775 V789.6 Q648 790.6 646.9 790.9 L641.8 792 Z" fill="url(#offR)"/>
<!-- teams highlight -->
<rect x="662" y="765" width="38.2" height="31" fill="#464945"/>
<rect x="700.2" y="765" width="3.6" height="31" fill="#2f322f"/>
<circle cx="684.2" cy="776.2" r="2.7" fill="#7b83eb"/>
<circle cx="690.3" cy="777.4" r="2.1" fill="#5059c9"/>
<path d="M686.5 780 H693 V785.8 Q693 789 690 789 H686.5 Z" fill="#5059c9"/>
<path d="M679 779.5 H688.5 V787 Q688.5 791 684 791 Q679 791 679 787 Z" fill="#7b83eb"/>
<rect x="671.7" y="777.4" width="9.8" height="10.9" rx="1" fill="#4b53bc"/>
<path d="M673.8 779.8 H679.4 M676.6 779.8 V786.2" stroke="#fff" stroke-width="1.4"/>
<circle cx="689.4" cy="788.3" r="5.6" fill="#c4314b"/>
<text x="689.4" y="791.6" font-family="Liberation Sans" font-size="9" font-weight="bold" fill="#fff" text-anchor="middle">3</text>
<!-- chrome H -->
<g transform="translate(128.8,0.3)"><use href="#chr"/></g>
<circle cx="731" cy="787.7" r="6.3" fill="#44515c" stroke="#22251f" stroke-width="0.8"/>
<text x="731" y="790.9" font-family="Liberation Sans" font-size="8" font-weight="bold" fill="#e8e8e8" text-anchor="middle">H</text>
<!-- tray -->
<path d="M862.7 785 L868.4 779.3 L874 785" fill="none" stroke="#e0e0e0" stroke-width="1.1"/>
<rect x="890.3" y="779.6" width="12" height="6.8" fill="none" stroke="#f2f2f2" stroke-width="1.1"/>
<rect x="892" y="781.3" width="2.8" height="3.4" fill="#f2f2f2"/>
<rect x="902.6" y="781.6" width="1.1" height="2.8" fill="#f2f2f2"/>
<path d="M918.6 786.8 Q916.4 786.6 916.6 784.3 Q916.9 782.2 919 782.3 Q919.6 777.8 923.6 777.7 Q927.8 777.9 928.3 781.8 Q930.6 782.2 930.3 784.8 L928 786.8 Z" fill="#d4d4d4"/>
<circle cx="927.7" cy="785.2" r="4.5" fill="#b8303a" stroke="#22251f" stroke-width="0.7"/>
<path d="M925.8 783.3 L929.6 787.1 M929.6 783.3 L925.8 787.1" stroke="#fff" stroke-width="0.9"/>
<g fill="none" stroke="#e6e6e6" stroke-width="1">
<path d="M948.5 787.5 A9.5 9.5 0 0 1 958 778"/>
<path d="M951.5 787.5 A6.5 6.5 0 0 1 958 781"/>
<path d="M954.5 787.5 A3.5 3.5 0 0 1 958 784"/>
</g>
<circle cx="957.3" cy="786.6" r="1.3" fill="#f0f0f0"/>
<g fill="none" stroke="#e6e6e6" stroke-width="1" stroke-linejoin="round">
<path d="M973.9 779.6 H976 L979.4 776.4 V787.4 L976 784.2 H973.9 Z"/>
<path d="M981.6 779.9 Q982.8 781.9 981.6 783.9"/>
<path d="M983.6 778.2 Q985.8 781.9 983.6 785.6"/>
<path d="M985.8 776.6 Q989 781.9 985.8 787.2"/>
</g>
<g fill="none" stroke="#e6e6e6" stroke-width="1.1" stroke-linejoin="round" stroke-linecap="round">
<path d="M1010.2 788.6 L1015.8 776.2 Q1016.6 775 1017.8 775.7 Q1018.8 776.4 1018.2 777.6 L1012.6 789.6 L1010.2 790 Z"/>
<path d="M1016.8 782 Q1019.6 782.2 1019.2 784 Q1018.6 785.2 1016 784.6"/>
<path d="M1009.2 784.4 Q1005.6 785.6 1005.4 787.8 Q1005.6 789.8 1008.8 789.6"/>
</g>
<text x="1045.5" y="778.8" font-family="Liberation Sans" font-size="9" fill="#e6e6e6" text-anchor="middle">ENG</text>
<circle cx="1068" cy="791" r="1.6" fill="#8a8a8a"/>
<text x="1045.5" y="793.6" font-family="Liberation Sans" font-size="9" fill="#e6e6e6" text-anchor="middle">IN</text>
</svg>

<div class="a" id="redline"></div>
</body></html>
